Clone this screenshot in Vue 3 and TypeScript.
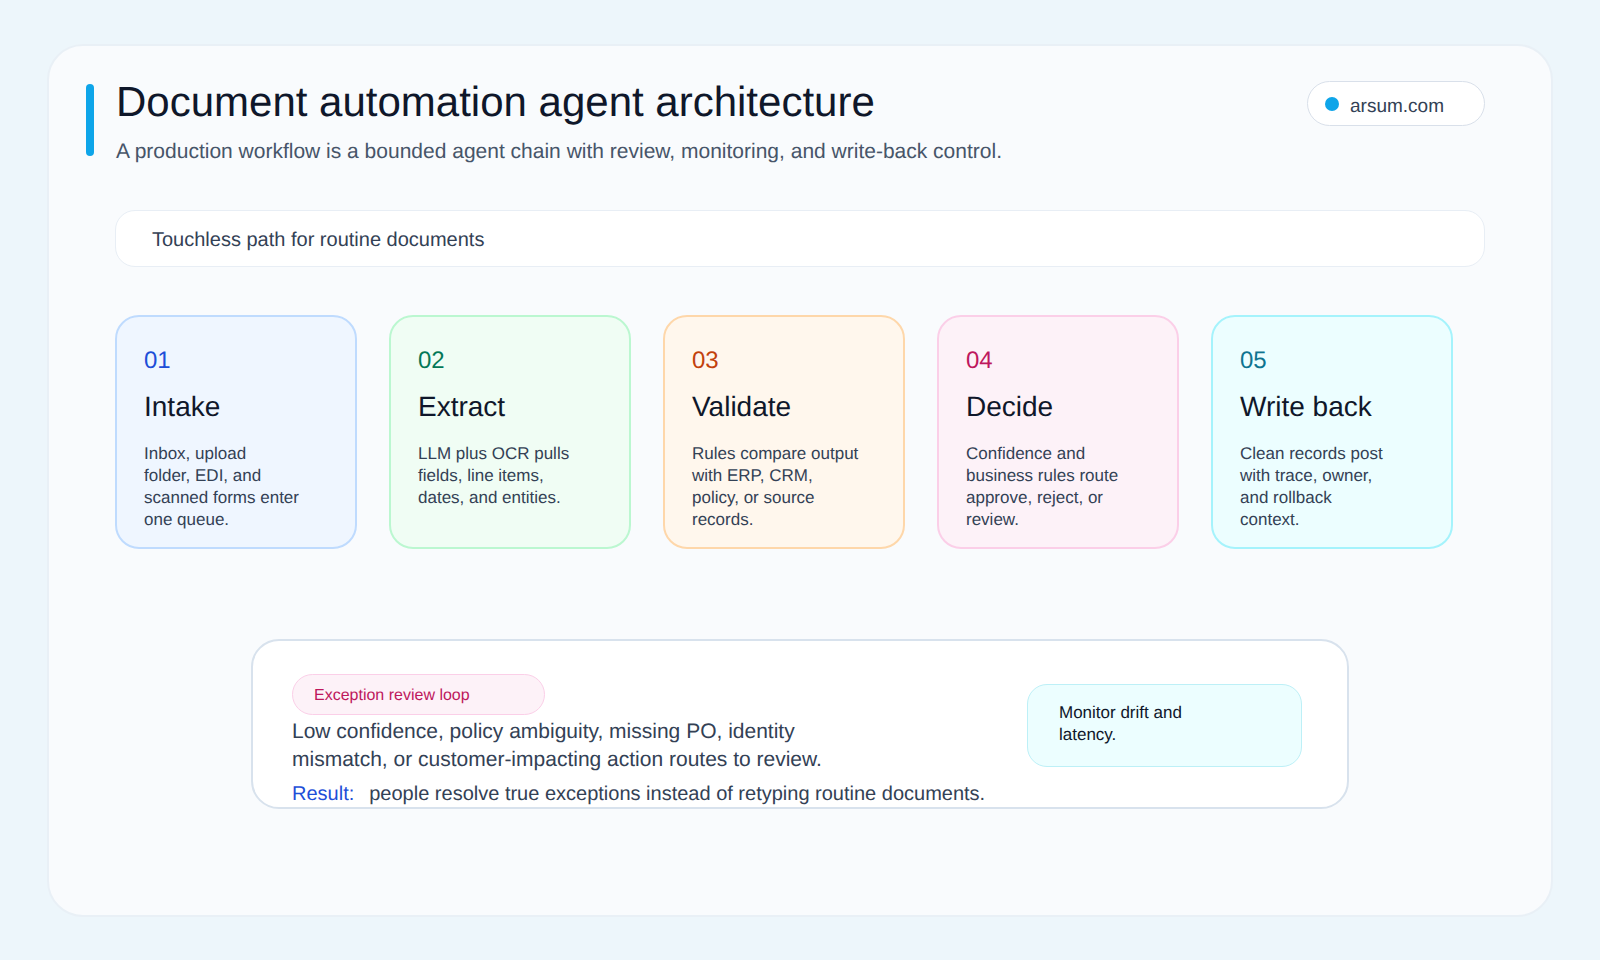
<script setup lang="ts">
interface Step {
  num: string
  title: string
  lines: string[]
  tone: string
}

const steps: Step[] = [
  { num: '01', title: 'Intake', tone: 'blue', lines: ['Inbox, upload', 'folder, EDI, and', 'scanned forms enter', 'one queue.'] },
  { num: '02', title: 'Extract', tone: 'green', lines: ['LLM plus OCR pulls', 'fields, line items,', 'dates, and entities.'] },
  { num: '03', title: 'Validate', tone: 'orange', lines: ['Rules compare output', 'with ERP, CRM,', 'policy, or source', 'records.'] },
  { num: '04', title: 'Decide', tone: 'pink', lines: ['Confidence and', 'business rules route', 'approve, reject, or', 'review.'] },
  { num: '05', title: 'Write back', tone: 'cyan', lines: ['Clean records post', 'with trace, owner,', 'and rollback', 'context.'] },
]
</script>

<template>
  <main class="page">
    <section class="sheet">
      <header class="head">
        <span class="accent"></span>
        <div class="head-text">
          <h1>Document automation agent architecture</h1>
          <p>A production workflow is a bounded agent chain with review, monitoring, and write-back control.</p>
        </div>
        <div class="brand">
          <span class="dot"></span>
          <span class="brand-name">arsum.com</span>
        </div>
      </header>

      <div class="banner">Touchless path for routine documents</div>

      <div class="steps">
        <article v-for="step in steps" :key="step.num" class="step" :class="step.tone">
          <div class="num">{{ step.num }}</div>
          <h2>{{ step.title }}</h2>
          <p>
            <span v-for="line in step.lines" :key="line" class="line">{{ line }}</span>
          </p>
        </article>
      </div>

      <div class="review">
        <div class="review-main">
          <div class="tag">Exception review loop</div>
          <p class="why">
            <span class="line">Low confidence, policy ambiguity, missing PO, identity</span>
            <span class="line">mismatch, or customer-impacting action routes to review.</span>
          </p>
          <p class="result"><b>Result:</b><span>people resolve true exceptions instead of retyping routine documents.</span></p>
        </div>
        <div class="monitor">
          <span class="line">Monitor drift and</span>
          <span class="line">latency.</span>
        </div>
      </div>
    </section>
  </main>
</template>

<style>
html,
body {
  margin: 0;
  background: #edf6fb;
}
</style>

<style scoped>
.page {
  width: 1600px;
  height: 960px;
  box-sizing: border-box;
  padding: 44px 47px;
  font-family: "Liberation Sans", Arial, sans-serif;
  color: #0f172a;
  text-rendering: geometricPrecision;
}

.sheet {
  box-sizing: border-box;
  height: 873px;
  padding: 31px 66px 0;
  background: #f9fbfd;
  border: 2px solid #e9f0f6;
  border-radius: 36px;
}

.line {
  display: block;
}

.head {
  display: flex;
  align-items: flex-start;
  position: relative;
}

.accent {
  position: absolute;
  left: -29px;
  top: 7px;
  width: 8px;
  height: 72px;
  border-radius: 4px;
  background: #0ea5e9;
}

.head-text {
  flex: 1;
  padding-left: 1px;
}

h1 {
  margin: 0;
  font-size: 42px;
  font-weight: 400;
  line-height: 50px;
  color: #0f172a;
}

.head-text p {
  margin: 11px 0 0;
  font-size: 21px;
  line-height: 28px;
  color: #475569;
}

.brand {
  box-sizing: border-box;
  display: flex;
  align-items: center;
  gap: 11px;
  width: 178px;
  height: 45px;
  padding-left: 17px;
  margin-top: 4px;
  background: #fff;
  border: 1.5px solid #d9e0ea;
  border-radius: 23px;
  font-size: 19px;
  color: #334155;
}

.brand-name {
  padding-top: 6px;
}

.dot {
  width: 14px;
  height: 14px;
  border-radius: 50%;
  background: #0ea5e9;
}

.banner {
  box-sizing: border-box;
  height: 57px;
  margin-top: 44px;
  padding: 4px 0 0 36px;
  display: flex;
  align-items: center;
  background: #fff;
  border: 1.5px solid #e8eef5;
  border-radius: 20px;
  font-size: 20px;
  color: #334155;
}

.steps {
  display: flex;
  gap: 32px;
  margin-top: 48px;
}

.step {
  box-sizing: border-box;
  width: 242px;
  height: 234px;
  padding: 30px 27px 0;
  border: 2px solid;
  border-radius: 24px;
}

.num {
  font-size: 24px;
  line-height: 28px;
}

.step h2 {
  margin: 15px 0 0;
  font-size: 28px;
  font-weight: 400;
  line-height: 34px;
  color: #0f172a;
}

.step p {
  margin: 19px 0 0;
  font-size: 17px;
  line-height: 22px;
  color: #334155;
}

.blue { background: #eff6ff; border-color: #bfdbfe; }
.blue .num { color: #1d4ed8; }
.green { background: #f0fdf4; border-color: #bbf7d0; }
.green .num { color: #047857; }
.orange { background: #fff7ed; border-color: #fed7aa; }
.orange .num { color: #c2410c; }
.pink { background: #fdf2f8; border-color: #fbcfe8; }
.pink .num { color: #be185d; }
.cyan { background: #ecfeff; border-color: #a5f3fc; }
.cyan .num { color: #0e7490; }

.review {
  box-sizing: border-box;
  display: flex;
  justify-content: space-between;
  width: 1098px;
  height: 170px;
  margin: 90px auto 0;
  padding: 33px 45px 0 39px;
  background: #fff;
  border: 2px solid #d8e2ed;
  border-radius: 28px;
}

.tag {
  box-sizing: border-box;
  width: 253px;
  height: 41px;
  padding: 2px 0 0 21px;
  display: flex;
  align-items: center;
  background: #fdf2f8;
  border: 1px solid #fbcfe8;
  border-radius: 21px;
  font-size: 16px;
  color: #be185d;
}

.why {
  margin: 3px 0 0;
  font-size: 21px;
  line-height: 28px;
  color: #334155;
}

.result {
  margin: 6px 0 0;
  font-size: 20px;
  line-height: 28px;
  color: #334155;
  white-space: nowrap;
}

.result b {
  margin-right: 15px;
  font-weight: 400;
  color: #1d4ed8;
}

.monitor {
  box-sizing: border-box;
  width: 275px;
  height: 83px;
  margin-top: 10px;
  padding: 17px 0 0 31px;
  background: #ecfeff;
  border: 1.5px solid #bdf0f7;
  border-radius: 20px;
  font-size: 17px;
  line-height: 22px;
  color: #0f172a;
}
</style>
